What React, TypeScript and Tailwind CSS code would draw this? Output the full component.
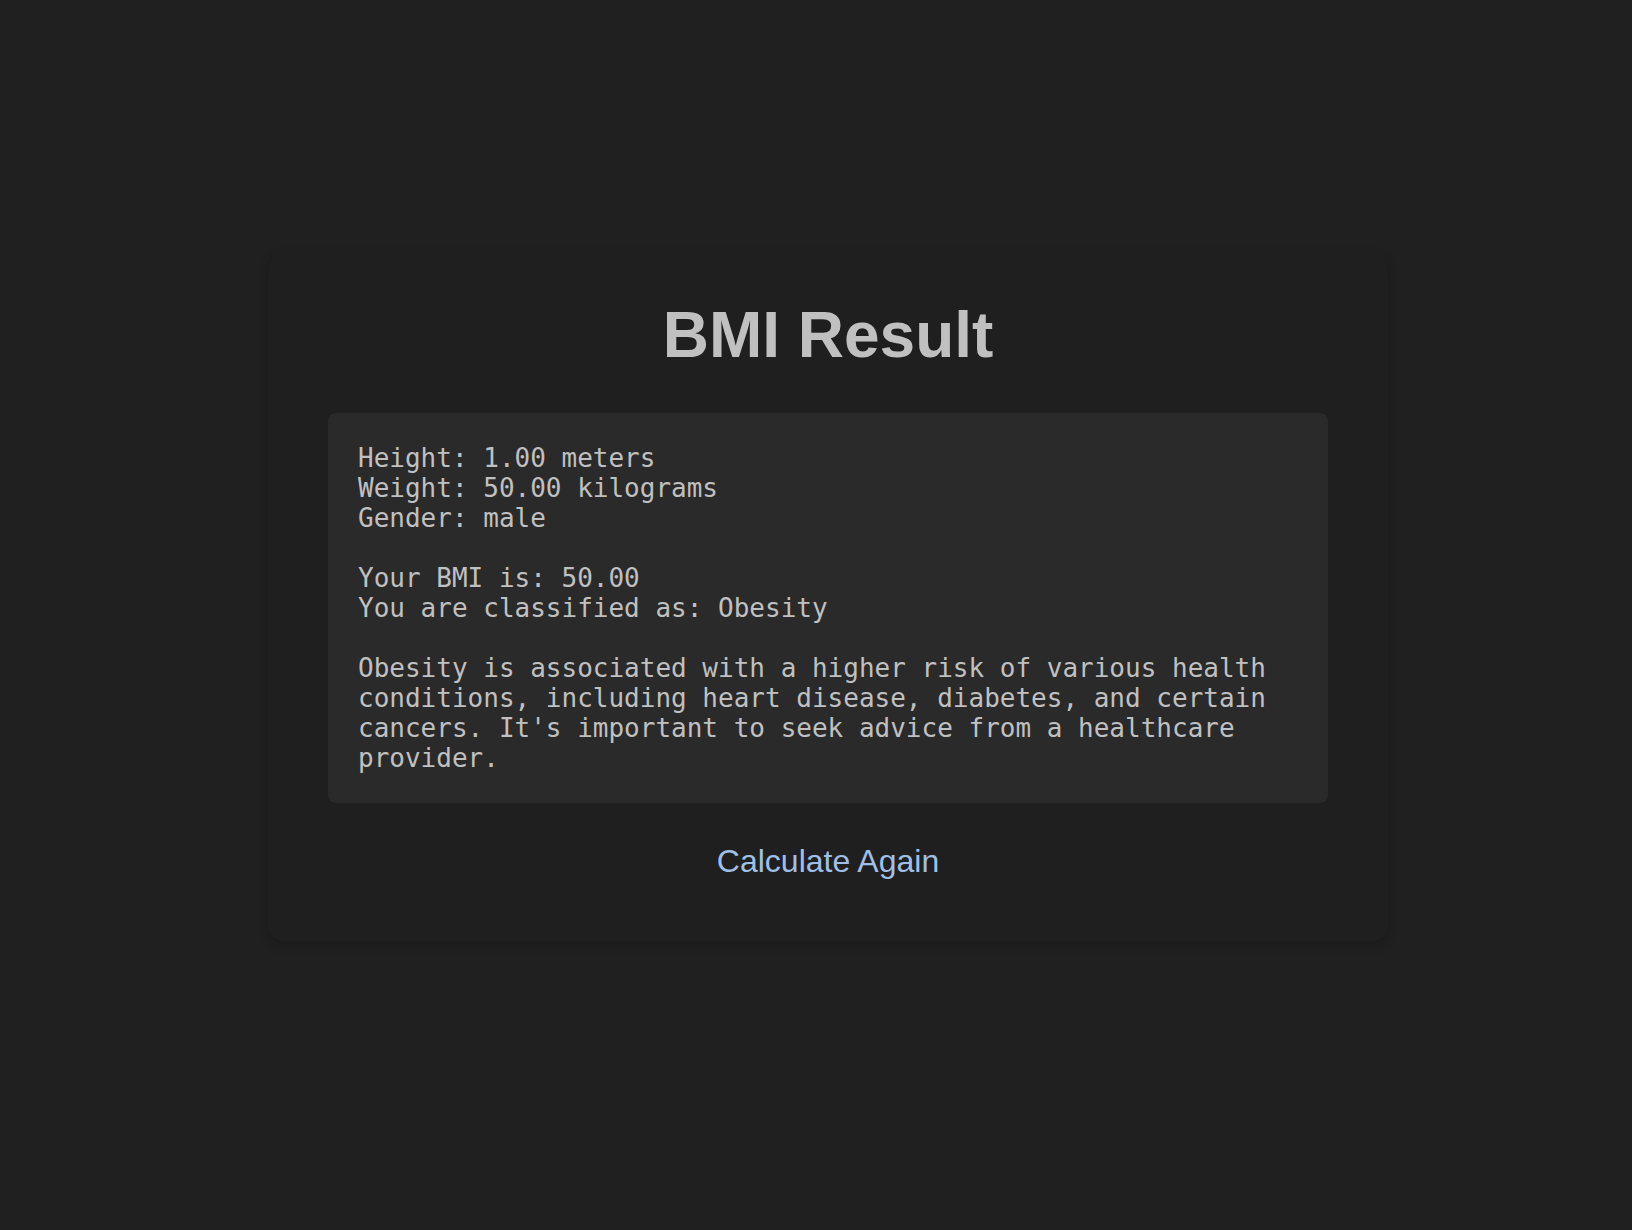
export default function App() {
  const details = `Height: 1.00 meters
Weight: 50.00 kilograms
Gender: male

Your BMI is: 50.00
You are classified as: Obesity

Obesity is associated with a higher risk of various health conditions, including heart disease, diabetes, and certain cancers. It's important to seek advice from a healthcare provider.`;

  return (
    <div className="min-h-screen w-full bg-[#202020] flex justify-center pt-[252px] font-['Liberation_Sans',Arial,sans-serif]">
      <div className="ml-[24px] w-[1120px] h-fit bg-[#1f1f1f] rounded-2xl shadow-[0_4px_12px_rgba(0,0,0,0.2)] px-[60px] pt-[51px] pb-[56px] flex flex-col items-center">
        <h1 className="text-[64px] leading-none font-bold text-[#c0c0c0] mb-[46px]">BMI Result</h1>
        <div className="w-[1000px] bg-[#2a2a2a] rounded-lg p-[30px]">
          <pre className="whitespace-pre-wrap font-['DejaVu_Sans_Mono',monospace] text-[26px] leading-[30px] text-[#c0c0c0] m-0">
            {details}
          </pre>
        </div>
        <a href="#" className="mt-[34px] text-[32px] text-[#9fbfe6] no-underline">
          Calculate Again
        </a>
      </div>
    </div>
  );
}
